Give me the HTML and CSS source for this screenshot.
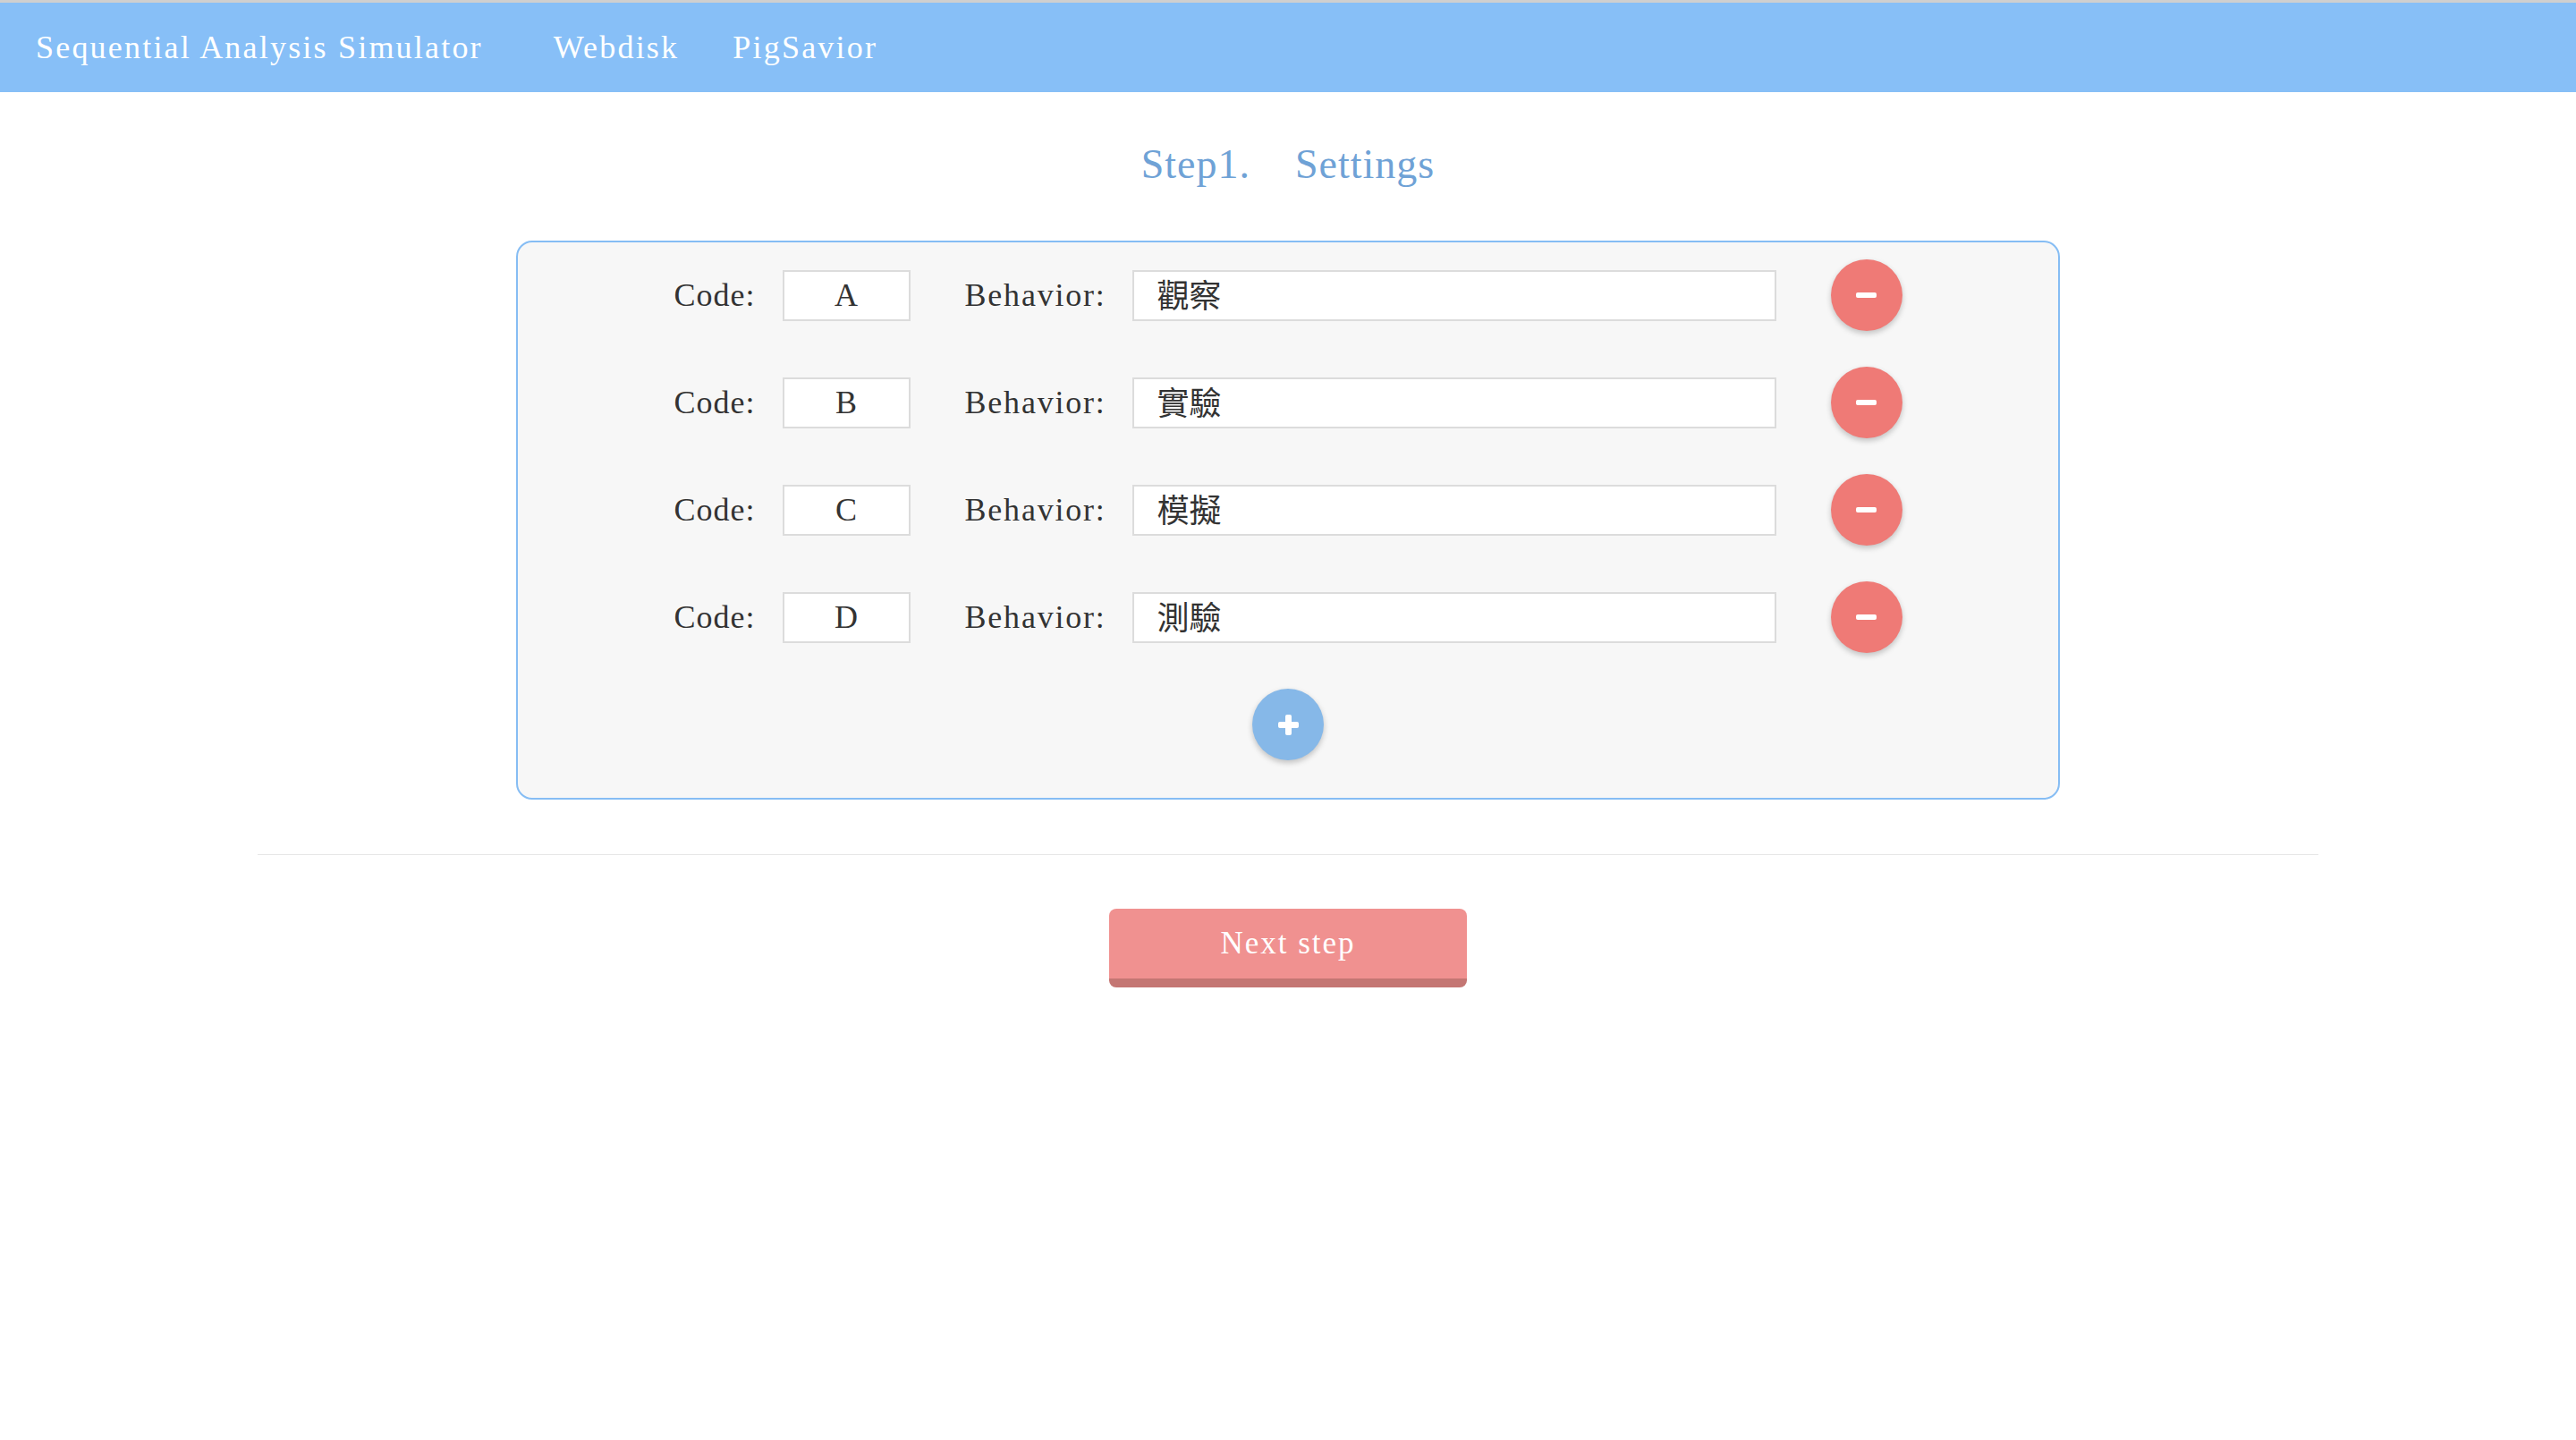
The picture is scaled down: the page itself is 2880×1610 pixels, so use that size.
FILE: index.html
```html
<!DOCTYPE html>
<html lang="zh-Hant">
<head>
<meta charset="utf-8">
<title>Sequential Analysis Simulator</title>
<link rel="stylesheet" href="styles.css">
</head>
<body>
<nav class="navbar">
  <span class="brand">Sequential Analysis Simulator</span>
  <a class="nav-link" href="#">Webdisk</a>
  <a class="nav-link" href="#">PigSavior</a>
</nav>
<main class="main">
  <h1 class="title"><span>Step1.</span><span>Settings</span></h1>
  <section class="card">
    <div class="row">
      <span class="label label-code">Code:</span>
      <input class="field field-code" type="text" value="A">
      <span class="label label-behavior">Behavior:</span>
      <input class="field field-behavior" type="text" value="觀察">
      <button class="circle circle-minus" type="button"><span class="bar"></span></button>
    </div>
    <div class="row">
      <span class="label label-code">Code:</span>
      <input class="field field-code" type="text" value="B">
      <span class="label label-behavior">Behavior:</span>
      <input class="field field-behavior" type="text" value="實驗">
      <button class="circle circle-minus" type="button"><span class="bar"></span></button>
    </div>
    <div class="row">
      <span class="label label-code">Code:</span>
      <input class="field field-code" type="text" value="C">
      <span class="label label-behavior">Behavior:</span>
      <input class="field field-behavior" type="text" value="模擬">
      <button class="circle circle-minus" type="button"><span class="bar"></span></button>
    </div>
    <div class="row">
      <span class="label label-code">Code:</span>
      <input class="field field-code" type="text" value="D">
      <span class="label label-behavior">Behavior:</span>
      <input class="field field-behavior" type="text" value="測驗">
      <button class="circle circle-minus" type="button"><span class="bar"></span></button>
    </div>
    <div class="add-row">
      <button class="circle circle-plus" type="button"><span class="bar"></span><span class="bar bar-v"></span></button>
    </div>
  </section>
  <hr class="divider">
  <div class="actions">
    <button class="next-btn" type="button">Next step</button>
  </div>
</main>
</body>
</html>
```

FILE: styles.css
```css
html, body {
  margin: 0;
  padding: 0;
  background: #ffffff;
}

body {
  border-top: 3px solid #cfcfcf;
  font-family: "Liberation Serif", "Noto Sans CJK TC", serif;
  color: #333333;
}

.navbar {
  height: 100px;
  background: #87bff7;
  display: flex;
  align-items: center;
  padding-left: 40px;
  font-size: 36px;
  line-height: 100px;
  letter-spacing: 2.2px;
}

.brand {
  color: #ffffff;
  margin-right: 79px;
}

.nav-link {
  color: #ffffff;
  text-decoration: none;
  margin-right: 60px;
}

.main {
  display: flex;
  flex-direction: column;
  align-items: center;
}

.title {
  margin: 51px 0 55px;
  font-weight: normal;
  font-size: 46px;
  line-height: 60px;
  letter-spacing: 1px;
  color: #6fa2d6;
  display: flex;
  gap: 50px;
}

.card {
  width: 1722px;
  border: 2px solid #86bdf4;
  border-radius: 18px;
  background: #f7f7f7;
  padding: 19px 0 42px;
  display: flex;
  flex-direction: column;
  align-items: center;
  gap: 40px;
}

.row {
  display: flex;
  align-items: center;
  height: 80px;
}

.label {
  font-size: 36px;
  letter-spacing: 1px;
  color: #333333;
  white-space: nowrap;
}

.label-code {
  width: 90px;
  margin-right: 31px;
}

.label-behavior {
  width: 158px;
  margin-right: 29px;
  letter-spacing: 1.8px;
}

.field {
  box-sizing: border-box;
  height: 57px;
  border: 2px solid #dcdcdc;
  background: #ffffff;
  font-family: "Liberation Serif", "Noto Sans CJK TC", serif;
  font-size: 36px;
  color: #333333;
  outline: none;
  margin: 0;
}

.field-code {
  width: 143px;
  text-align: center;
  padding: 0;
  margin-right: 61px;
}

.field-behavior {
  width: 720px;
  padding: 0 0 5px 26px;
  margin-right: 61px;
  font-family: "Noto Sans CJK TC", sans-serif;
  font-size: 36px;
}

.circle {
  position: relative;
  width: 80px;
  height: 80px;
  border-radius: 50%;
  border: none;
  padding: 0;
  display: flex;
  align-items: center;
  justify-content: center;
  box-shadow: 0 3px 6px rgba(0, 0, 0, 0.22);
  cursor: pointer;
}

.circle-minus {
  background: #ef7a76;
}

.circle-plus {
  background: #86b8e8;
}

.bar {
  display: block;
  width: 23px;
  height: 6px;
  border-radius: 2px;
  background: #ffffff;
}

.circle-plus .bar {
  height: 7px;
}

.circle-plus .bar-v {
  position: absolute;
  width: 7px;
  height: 23px;
  left: 36.5px;
  top: 28.5px;
}

.add-row {
  display: flex;
  justify-content: center;
}

.divider {
  width: 2304px;
  margin: 61px 0 0;
  border: none;
  border-top: 1px solid #e6e6e6;
  height: 0;
}

.actions {
  margin-top: 60px;
  display: flex;
  justify-content: center;
}

.next-btn {
  width: 400px;
  height: 88px;
  box-sizing: border-box;
  border: none;
  border-bottom: 10px solid #c47673;
  border-radius: 8px;
  background: #f09190;
  color: #ffffff;
  font-family: "Liberation Serif", serif;
  font-size: 35px;
  letter-spacing: 2px;
  line-height: 78px;
  padding: 0;
  cursor: pointer;
}
```
